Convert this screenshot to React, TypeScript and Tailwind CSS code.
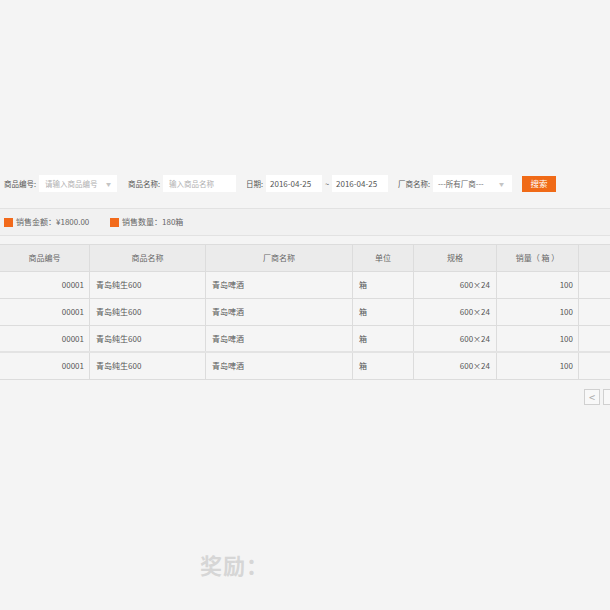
const font = { fontFamily: '"Noto Sans CJK SC", "Noto Sans", sans-serif' };

const columns = ["商品编号", "商品名称", "厂商名称", "单位", "规格", "销量（ 箱 ）", ""];

const rows = [1, 2, 3, 4].map(() => ({
  code: "00001",
  name: "青岛纯生600",
  maker: "青岛啤酒",
  unit: "箱",
  spec: "600×24",
  qty: "100",
}));

const gridCols = "grid grid-cols-[90px_116px_147px_61px_83px_82px_80px] w-[659px]";

export default function App() {
  return (
    <main
      className="relative w-[610px] h-[610px] overflow-hidden bg-[#f4f4f4] text-[8px] text-[#555] leading-none pt-[175px]"
      style={font}
    >
      {/* Filter row */}
      <div className="flex items-center pl-[4px] h-[17px] text-[7.5px] whitespace-nowrap w-[640px]">
        <span className="w-[35px] shrink-0">商品编号:</span>
        <div className="w-[78px] h-[17px] shrink-0 bg-white flex items-center justify-between px-[6px]">
          <span className="text-[#b0b0b0]">请输入商品编号</span>
          <span className="text-[5px] text-[#c4c4c4]">▼</span>
        </div>
        <span className="w-[35px] ml-[11px] shrink-0">商品名称:</span>
        <div className="w-[73px] h-[17px] shrink-0 bg-white flex items-center px-[6px] text-[#b0b0b0]">输入商品名称</div>
        <span className="w-[20px] ml-[10px] shrink-0">日期:</span>
        <div className="w-[56px] h-[17px] shrink-0 bg-white flex items-center px-[4px] text-[8px] text-[#555]">2016-04-25</div>
        <span className="w-[10px] shrink-0 text-center">~</span>
        <div className="w-[56px] h-[17px] shrink-0 bg-white flex items-center px-[4px] text-[8px] text-[#555]">2016-04-25</div>
        <span className="w-[35px] ml-[10px] shrink-0">厂商名称:</span>
        <div className="w-[79px] h-[17px] shrink-0 bg-white flex items-center justify-between px-[5px]">
          <span className="text-[#666]">---所有厂商---</span>
          <span className="text-[5px] text-[#c4c4c4] mr-[3px]">▼</span>
        </div>
        <button className="ml-[10px] w-[34px] h-[16px] shrink-0 bg-[#f06a17] text-white text-[8.5px] flex items-center justify-center">
          搜索
        </button>
      </div>

      {/* Summary bar */}
      <div className="mt-[16px] h-[28px] border-y border-[#e2e2e2] bg-[#f1f1f1] flex items-center pl-[4px] text-[#666] text-[8px] whitespace-nowrap">
        <span className="w-[9px] h-[9px] bg-[#f26a1b] shrink-0" />
        <span className="ml-[3px] w-[82px] shrink-0">销售金额：¥1800.00</span>
        <span className="ml-[12px] w-[9px] h-[9px] bg-[#f26a1b] shrink-0" />
        <span className="ml-[3px]">销售数量：180箱</span>
      </div>

      {/* Table */}
      <div className="mt-[8px] text-[8px]">
        <div className={`${gridCols} h-[28px] bg-[#ebebeb] border-y border-[#dcdcdc]`}>
          {columns.map((c, i) => (
            <div key={i} className="flex items-center justify-center border-r border-[#dcdcdc] text-[#666] whitespace-pre">
              {c}
            </div>
          ))}
        </div>
        {rows.map((r, i) => (
          <div
            key={i}
            className={`${gridCols} h-[27px] bg-[#f5f5f5] ${i === 2 ? "border-b-[2px] border-[#e3e3e3]" : "border-b border-[#dcdcdc]"}`}
          >
            <div className="flex items-center justify-end pr-[5px] border-r border-[#dcdcdc]">{r.code}</div>
            <div className="flex items-center pl-[6px] border-r border-[#dcdcdc]">{r.name}</div>
            <div className="flex items-center pl-[6px] border-r border-[#dcdcdc]">{r.maker}</div>
            <div className="flex items-center pl-[6px] border-r border-[#dcdcdc]">{r.unit}</div>
            <div className="flex items-center justify-end pr-[6px] border-r border-[#dcdcdc]">{r.spec}</div>
            <div className="flex items-center justify-end pr-[5px] border-r border-[#dcdcdc]">{r.qty}</div>
            <div className="border-r border-[#dcdcdc]" />
          </div>
        ))}
      </div>

      {/* Pagination */}
      <div className="mt-[9px] flex pl-[584px] gap-[3px] w-[660px]">
        <div className="w-[16px] h-[16px] shrink-0 border border-[#d0d0d0] bg-[#f8f8f8] flex items-center justify-center text-[11px] text-[#aaa]">
          &lt;
        </div>
        <div className="w-[16px] h-[16px] shrink-0 border border-[#d0d0d0] bg-[#f8f8f8]" />
      </div>

      {/* Reward heading */}
      <div className="mt-[148px] pl-[200px] text-[22px] font-bold text-[#d6d6d6] tracking-[1px]">奖励：</div>
    </main>
  );
}
